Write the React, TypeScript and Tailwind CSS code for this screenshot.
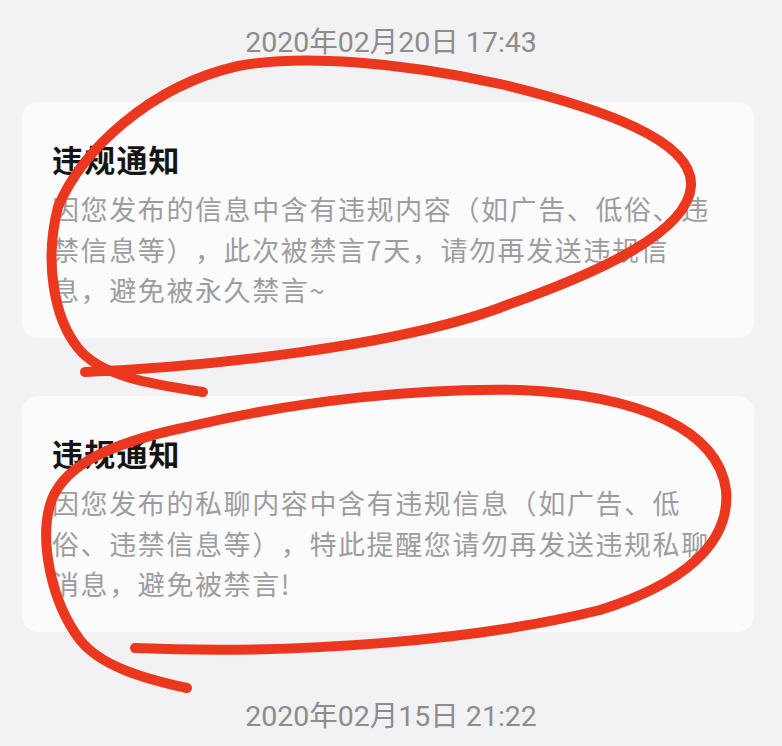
import React from "react";

type Notice = {
  title: string;
  body: string;
};

const notices: Notice[] = [
  {
    title: "违规通知",
    body: "因您发布的信息中含有违规内容（如广告、低俗、违禁信息等），此次被禁言7天，请勿再发送违规信息，避免被永久禁言~",
  },
  {
    title: "违规通知",
    body: "因您发布的私聊内容中含有违规信息（如广告、低俗、违禁信息等），特此提醒您请勿再发送违规私聊消息，避免被禁言!",
  },
];

function TimeStamp({ text }: { text: string }) {
  return (
    <div className="text-center text-[28.5px] leading-[40px] text-[#8c8c8c] font-['Roboto','Noto_Sans_CJK_SC',sans-serif]">
      {text}
    </div>
  );
}

function NoticeCard({ notice }: { notice: Notice }) {
  return (
    <div className="ml-[22px] mr-[28px] h-[236px] rounded-[16px] bg-[#fbfbfc] pl-[30px] pr-[32px] pt-[37px]">
      <h2 className="text-[31px] leading-[40px] font-bold tracking-[1.2px] text-[#151515] font-['Noto_Sans_CJK_SC',sans-serif]">
        {notice.title}
      </h2>
      <p className="mt-[10px] text-[27px] leading-[40.7px] tracking-[1.6px] text-[#9d9d9f] [text-spacing-trim:space-all] font-['Noto_Sans_CJK_SC',sans-serif]">
        {notice.body}
      </p>
    </div>
  );
}

// hand-drawn red circles over the two notices
function Scribbles() {
  return (
    <svg
      className="pointer-events-none absolute inset-0"
      width="782"
      height="746"
      viewBox="0 0 782 746"
      fill="none"
    >
      <g stroke="#ec371f" strokeWidth="10" strokeLinecap="round" strokeLinejoin="round">
        <path d="M 85 372 C 200 367, 400 347, 507 305 C 600 272, 688 232, 691 186 C 694 140, 600 108, 500 84 C 400 62, 300 54, 238 66 C 150 86, 82 150, 58 207 C 44 262, 54 318, 78 348 C 100 376, 150 384, 203 392" />
        <path d="M 187 688 C 140 678, 100 665, 80 640 C 50 600, 40 540, 50 505 C 60 470, 100 445, 187 427 C 300 400, 420 388, 520 390 C 640 395, 718 430, 726 490 C 731 545, 680 585, 600 610 C 480 640, 300 655, 135 648" />
      </g>
    </svg>
  );
}

export default function App() {
  return (
    <div className="relative h-[746px] w-[782px] overflow-hidden bg-[#f2f2f4]">
      <div className="pt-[23px]">
        <TimeStamp text="2020年02月20日 17:43" />
      </div>
      <div className="mt-[39px] flex flex-col gap-[58px]">
        {notices.map((n, i) => (
          <NoticeCard key={i} notice={n} />
        ))}
      </div>
      <div className="mt-[65px]">
        <TimeStamp text="2020年02月15日 21:22" />
      </div>
      <Scribbles />
    </div>
  );
}
